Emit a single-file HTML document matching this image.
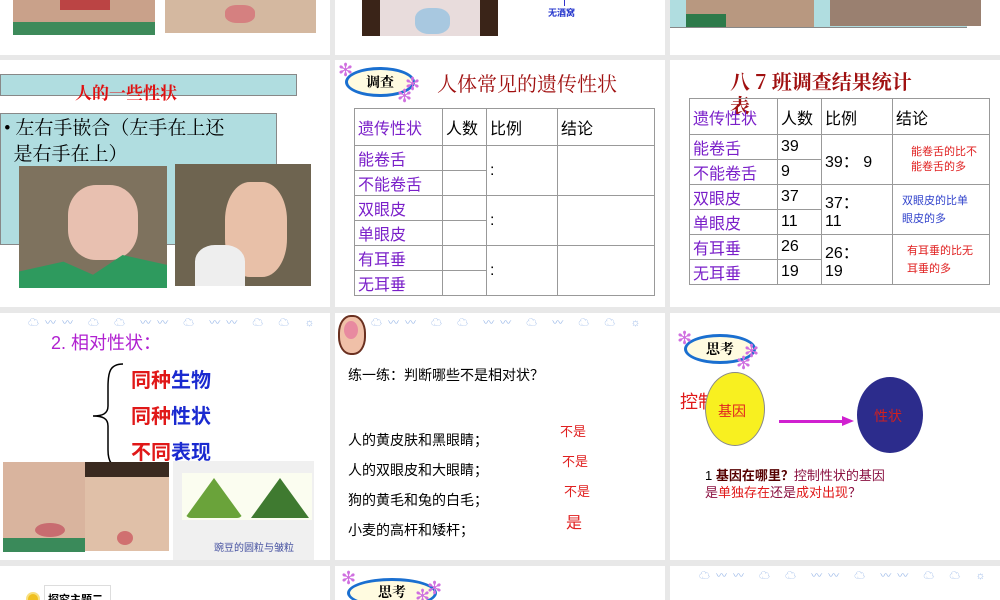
<!DOCTYPE html>
<html><head><meta charset="utf-8"><style>
*{margin:0;padding:0;box-sizing:border-box}
body{width:1000px;height:600px;background:#e8e8e8;position:relative;overflow:hidden;font-family:"Liberation Sans","Noto Sans CJK SC",sans-serif}
.s{position:absolute;background:#fff;overflow:hidden}
.a{position:absolute;white-space:nowrap}
.ph{position:absolute}
table{border-collapse:collapse;position:absolute;font-family:"Liberation Sans","Noto Sans CJK SC",sans-serif}
td{border:1px solid #999;padding:0 3px;vertical-align:middle}
.pu{color:#7a1fc9}
.badge{position:absolute;border:3px solid #1a6fd0;border-radius:50%;background:#fffbe0;font-weight:bold;font-family:"Noto Serif CJK SC",serif;text-align:center;color:#000}
.fl{position:absolute;color:#d070e0;font-size:18px}
.cl{position:absolute;color:#9ab8e8;font-size:11px;letter-spacing:6px}
</style></head><body>

<!-- row0 -->
<div class="s" style="left:0;top:0;width:330px;height:55px">
 <div class="ph" style="left:13px;top:0;width:142px;height:35px;background:#c9a18a"></div>
 <div class="ph" style="left:60px;top:0;width:50px;height:10px;background:#b44"></div>
 <div class="ph" style="left:13px;top:22px;width:142px;height:13px;background:#3d8a5a"></div>
 <div class="ph" style="left:165px;top:0;width:151px;height:33px;background:#d4b8a0"></div>
 <div class="ph" style="left:225px;top:5px;width:30px;height:18px;background:#d58080;border-radius:40%"></div>
</div>
<div class="s" style="left:335px;top:0;width:330px;height:55px">
 <div class="ph" style="left:27px;top:0;width:136px;height:36px;background:#3a2418"></div>
 <div class="ph" style="left:45px;top:0;width:100px;height:36px;background:#e8dcdc"></div>
 <div class="ph" style="left:80px;top:8px;width:35px;height:26px;background:#a8c8e0;border-radius:40%"></div>
 <div class="ph" style="left:229px;top:0;width:1px;height:6px;background:#33c"></div>
 <div class="a" style="left:213px;top:6px;font-size:9px;color:#2233cc;font-weight:bold">无酒窝</div>
</div>
<div class="s" style="left:670px;top:0;width:330px;height:55px">
 <div class="ph" style="left:0;top:0;width:297px;height:28px;background:#b0dde0;border-bottom:1px solid #888"></div>
 <div class="ph" style="left:16px;top:0;width:128px;height:27px;background:#b89880"></div>
 <div class="ph" style="left:16px;top:14px;width:40px;height:13px;background:#2d7a4a"></div>
 <div class="ph" style="left:160px;top:0;width:151px;height:26px;background:#9a8070"></div>
</div>

<!-- row1 -->
<div class="s" style="left:0;top:60px;width:330px;height:247px">
 <div class="ph" style="left:0;top:14px;width:297px;height:22px;background:#b0dde0;border:1px solid #888"></div>
 <div class="a" style="left:75px;top:19px;font-size:17px;font-weight:bold;color:#e01010;font-family:'Noto Serif CJK SC',serif">人的一些性状</div>
 <div class="ph" style="left:0;top:53px;width:277px;height:132px;background:#b0dde0;border:1px solid #888"></div>
 <div class="a" style="left:4px;top:56px;font-size:19px;line-height:26px;color:#000;font-family:'Liberation Serif','Noto Serif CJK SC',serif">• 左右手嵌合（左手在上还<br>&nbsp;&nbsp;是右手在上）</div>
 <div class="ph" style="left:19px;top:106px;width:148px;height:122px;background:#7e725e"></div>
 <div class="ph" style="left:68px;top:125px;width:70px;height:75px;background:#e8c0b0;border-radius:40%"></div>
 <div class="ph" style="left:19px;top:195px;width:148px;height:33px;background:#2e9a5e;clip-path:polygon(0 50%,30% 20%,50% 60%,70% 0,100% 30%,100% 100%,0 100%)"></div>
 <div class="ph" style="left:175px;top:104px;width:136px;height:122px;background:#6e6450"></div>
 <div class="ph" style="left:225px;top:122px;width:62px;height:95px;background:#e8c0a8;border-radius:40%"></div>
 <div class="ph" style="left:195px;top:185px;width:50px;height:41px;background:#eee;border-radius:40% 40% 0 0"></div>
</div>

<div class="s" style="left:335px;top:60px;width:330px;height:247px">
 <div class="badge" style="left:10px;top:7px;width:70px;height:30px;font-size:14px;line-height:24px">调查</div>
 <div class="fl" style="left:3px;top:0">✻</div><div class="fl" style="left:70px;top:14px">✻</div><div class="fl" style="left:62px;top:26px">✻</div>
 <div class="a" style="left:102px;top:8px;font-size:20px;color:#a01010;font-family:'Noto Serif CJK SC',serif">人体常见的遗传性状</div>
 <table style="left:19px;top:48px;width:301px;font-size:16px">
  <tr style="height:37px"><td class="pu" style="width:88px">遗传性状</td><td style="width:44px">人数</td><td style="width:71px">比例</td><td>结论</td></tr>
  <tr style="height:25px"><td class="pu">能卷舌</td><td></td><td rowspan="2">:</td><td rowspan="2"></td></tr>
  <tr style="height:25px"><td class="pu">不能卷舌</td><td></td></tr>
  <tr style="height:25px"><td class="pu">双眼皮</td><td></td><td rowspan="2">:</td><td rowspan="2"></td></tr>
  <tr style="height:25px"><td class="pu">单眼皮</td><td></td></tr>
  <tr style="height:25px"><td class="pu">有耳垂</td><td></td><td rowspan="2">:</td><td rowspan="2"></td></tr>
  <tr style="height:25px"><td class="pu">无耳垂</td><td></td></tr>
 </table>
</div>

<div class="s" style="left:670px;top:60px;width:330px;height:247px">
 <div class="a" style="left:60px;top:9px;font-size:20px;font-weight:bold;color:#a01010;line-height:24px;font-family:'Noto Serif CJK SC',serif">八 7 班调查结果统计<br>表</div>
 <table style="left:19px;top:38px;width:301px;font-size:16px;background:transparent">
  <tr style="height:36px"><td class="pu" style="width:88px">遗传性状</td><td style="width:44px">人数</td><td style="width:71px">比例</td><td>结论</td></tr>
  <tr style="height:25px"><td class="pu">能卷舌</td><td>39</td><td rowspan="2">39： 9</td><td rowspan="2" style="font-size:11px;color:#e02020;line-height:15px;padding-left:18px">能卷舌的比不<br>能卷舌的多</td></tr>
  <tr style="height:25px"><td class="pu">不能卷舌</td><td>9</td></tr>
  <tr style="height:25px"><td class="pu">双眼皮</td><td>37</td><td rowspan="2">37：<br>11</td><td rowspan="2" style="font-size:11px;color:#3344cc;line-height:18px;padding-left:9px">双眼皮的比单<br>眼皮的多</td></tr>
  <tr style="height:25px"><td class="pu">单眼皮</td><td>11</td></tr>
  <tr style="height:25px"><td class="pu">有耳垂</td><td>26</td><td rowspan="2">26：<br>19</td><td rowspan="2" style="font-size:11px;color:#e02020;line-height:18px;padding-left:14px">有耳垂的比无<br>耳垂的多</td></tr>
  <tr style="height:25px"><td class="pu">无耳垂</td><td>19</td></tr>
 </table>
</div>

<!-- row2 -->
<div class="s" style="left:0;top:313px;width:330px;height:247px">
 <div class="cl" style="left:28px;top:1px">☁〰〰 ☁ ☁ 〰〰 ☁ 〰〰 ☁ ☁ ☼</div>
 <div class="a" style="left:51px;top:16px;font-size:18px;color:#b020d0">2. 相对性状：</div>
 <svg class="ph" style="left:90px;top:49px" width="35" height="108"><path d="M33 2 C20 2 18 10 18 25 L18 44 C18 52 12 54 3 54 C12 54 18 56 18 64 L18 88 C18 100 22 106 33 106" fill="none" stroke="#000" stroke-width="1.5"/></svg>
 <div class="a" style="left:131px;top:50px;font-size:20px;line-height:36px;font-weight:bold"><span style="color:#e01818">同种</span><span style="color:#1a2ad0">生物</span><br><span style="color:#e01818">同种</span><span style="color:#1a2ad0">性状</span><br><span style="color:#e01818">不同</span><span style="color:#1a2ad0">表现</span></div>
 <div class="ph" style="left:3px;top:149px;width:82px;height:90px;background:#d9b49e"></div>
 <div class="ph" style="left:35px;top:210px;width:30px;height:14px;background:#c86c70;border-radius:50%"></div>
 <div class="ph" style="left:3px;top:225px;width:82px;height:14px;background:#3a8a5a"></div>
 <div class="ph" style="left:85px;top:149px;width:84px;height:89px;background:#e0c0a8"></div>
 <div class="ph" style="left:85px;top:149px;width:84px;height:15px;background:#3a2a20"></div>
 <div class="ph" style="left:117px;top:218px;width:16px;height:14px;background:#d07070;border-radius:50%"></div>
 <div class="ph" style="left:173px;top:148px;width:141px;height:99px;background:#f0f0f0"></div>
 <div class="ph" style="left:182px;top:160px;width:130px;height:47px;background:#fbfdf0"></div>
 <div class="ph" style="left:185px;top:165px;width:58px;height:40px;background:#6aa33a;clip-path:polygon(50% 0,100% 100%,0 100%);border-radius:6px"></div>
 <div class="ph" style="left:251px;top:165px;width:58px;height:40px;background:#3f7a30;clip-path:polygon(50% 0,100% 100%,0 100%)"></div>
 <div class="a" style="left:214px;top:226px;font-size:10px;color:#4450a0">豌豆的圆粒与皱粒</div>
</div>

<div class="s" style="left:335px;top:313px;width:330px;height:247px">
 <div class="ph" style="left:3px;top:2px;width:28px;height:40px;background:#f0c0a8;border-radius:45%;border:2px solid #6a3020"></div>
 <div class="ph" style="left:9px;top:8px;width:14px;height:18px;background:#e88aa0;border-radius:50%"></div>
 <div class="cl" style="left:36px;top:1px">☁〰〰 ☁ ☁ 〰〰 ☁ 〰 ☁ ☁ ☼</div>
 <div class="a" style="left:13px;top:52px;font-size:14px;color:#000">练一练：判断哪些不是相对状？</div>
 <div class="a" style="left:13px;top:112px;font-size:14px;line-height:30px;color:#000">人的黄皮肤和黑眼睛；<br>人的双眼皮和大眼睛；<br>狗的黄毛和兔的白毛；<br>小麦的高杆和矮杆；</div>
 <div class="a" style="left:225px;top:108px;font-size:13px;color:#e02020">不是</div>
 <div class="a" style="left:227px;top:138px;font-size:13px;color:#e02020">不是</div>
 <div class="a" style="left:229px;top:168px;font-size:13px;color:#e02020">不是</div>
 <div class="a" style="left:231px;top:196px;font-size:16px;color:#e02020">是</div>
</div>

<div class="s" style="left:670px;top:313px;width:330px;height:247px">
 <div class="badge" style="left:14px;top:21px;width:72px;height:30px;font-size:14px;line-height:24px">思考</div>
 <div class="fl" style="left:7px;top:15px">✻</div><div class="fl" style="left:74px;top:28px">✻</div><div class="fl" style="left:66px;top:40px">✻</div>
 <div class="a" style="left:10px;top:75px;font-size:18px;color:#e01818">控制</div>
 <div class="ph" style="left:35px;top:59px;width:60px;height:74px;background:#f8f020;border:1px solid #888;border-radius:50%"></div>
 <div class="a" style="left:48px;top:88px;font-size:14px;color:#e02020">基因</div>
 <div class="ph" style="left:109px;top:107px;width:68px;height:3px;background:#d020d0"></div>
 <div class="ph" style="left:172px;top:103px;border-left:12px solid #d020d0;border-top:5px solid transparent;border-bottom:5px solid transparent"></div>
 <div class="ph" style="left:187px;top:64px;width:66px;height:76px;background:#2c2c8c;border-radius:50%"></div>
 <div class="a" style="left:204px;top:93px;font-size:14px;color:#d02020">性状</div>
 <div class="a" style="left:35px;top:154px;font-size:13px;line-height:17px;color:#000">1 <b style="color:#500">基因在哪里？</b><span style="color:#8a1040">控制性状的基因</span><br><span style="color:#8a1040">是</span><span style="color:#e01818">单独存在</span><span style="color:#8a1040">还是</span><span style="color:#e01818">成对出现</span><span style="color:#8a1040">？</span></div>
</div>

<!-- row3 -->
<div class="s" style="left:0;top:566px;width:330px;height:34px">
 <div class="ph" style="left:26px;top:26px;width:14px;height:14px;border-radius:50%;background:#f0c020;border:2px solid #f8e080"></div>
 <div class="ph" style="left:44px;top:19px;width:67px;height:20px;border:1px solid #ddd"></div>
 <div class="a" style="left:48px;top:25px;font-size:11px;font-weight:bold;color:#000">探究主题二</div>
</div>
<div class="s" style="left:335px;top:566px;width:330px;height:34px">
 <div class="badge" style="left:12px;top:12px;width:90px;height:30px;font-size:14px;line-height:22px">思考</div>
 <div class="fl" style="left:6px;top:2px">✻</div><div class="fl" style="left:92px;top:12px">✻</div><div class="fl" style="left:80px;top:20px">✻</div>
</div>
<div class="s" style="left:670px;top:566px;width:330px;height:34px">
 <div class="cl" style="left:29px;top:1px">☁〰〰 ☁ ☁ 〰〰 ☁ 〰〰 ☁ ☁ ☼</div>
</div>
</body></html>
